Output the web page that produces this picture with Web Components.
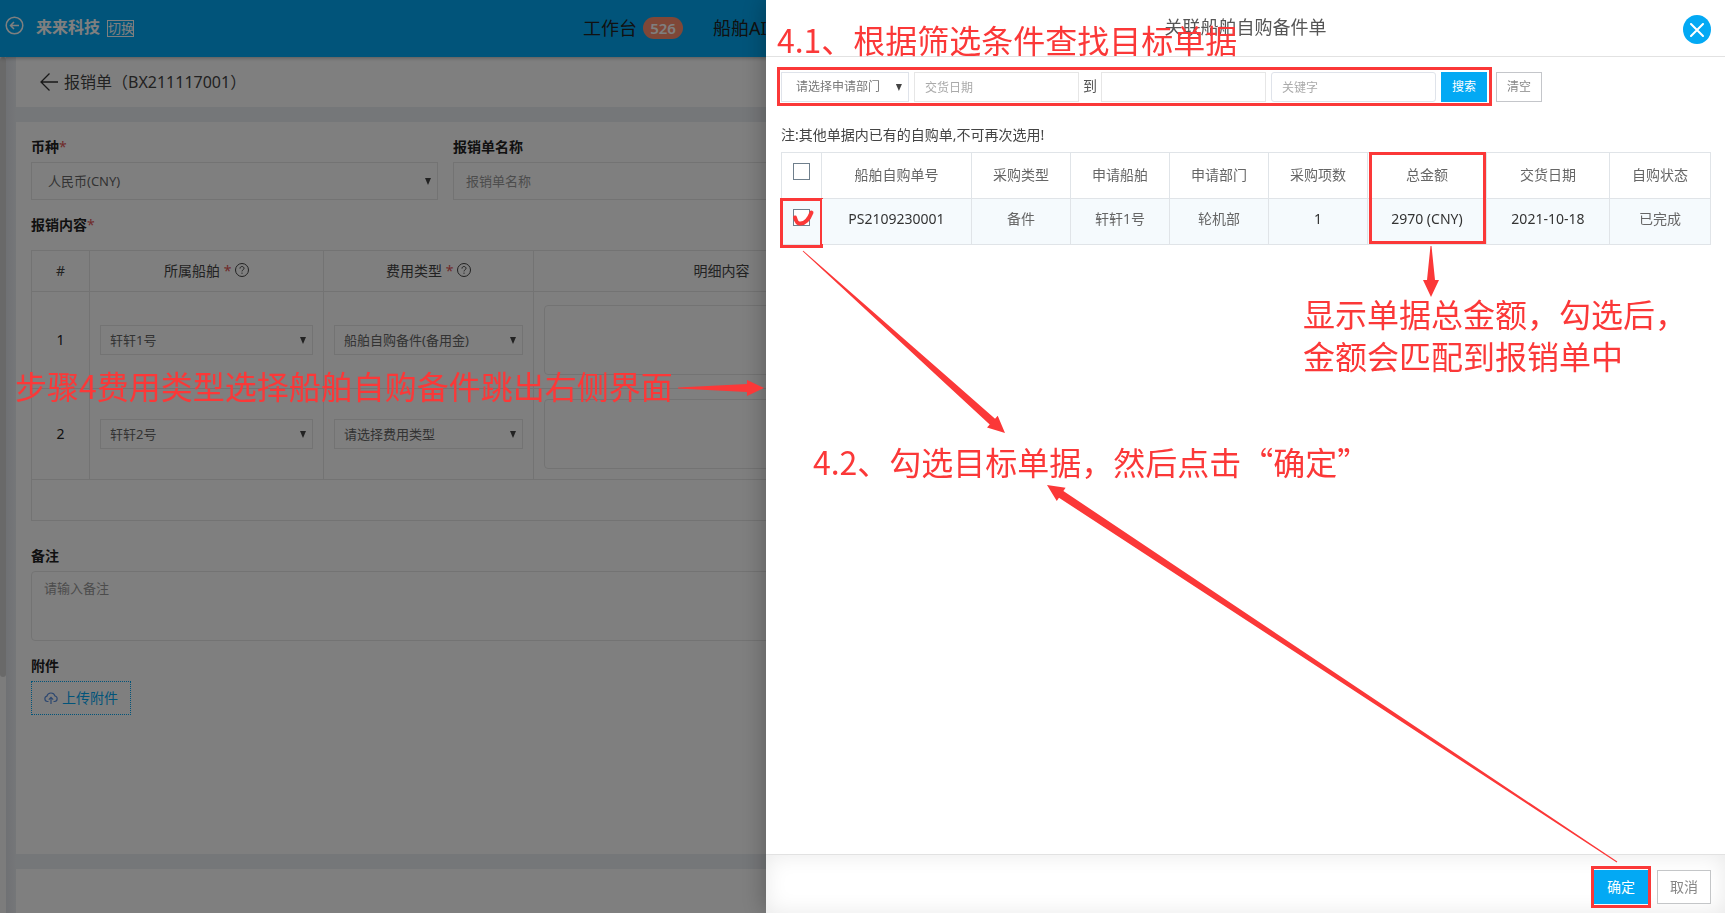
<!DOCTYPE html>
<html lang="zh-CN">
<head>
<meta charset="utf-8">
<meta name="viewport" content="width=device-width, initial-scale=1">
<title>报销单</title>
<style>
  html, body { margin: 0; height: 100%; }
  body {
    overflow: hidden;
    font-family: "Noto Sans", "Noto Sans CJK SC", sans-serif;
    font-size: 14px; line-height: 20px; color: #333;
    --brand: #03a9f4; --line: #e6e6e6; --mark: #fb3838;
  }
</style>
</head>
<body>
<expense-app></expense-app>

<script>
const BASE = `
  *, *::before, *::after { box-sizing: border-box; }
  input, select, textarea, button { font: inherit; color: inherit; margin: 0; border-radius: 0; outline: 0; }
  input, textarea, select { border: 1px solid var(--line); background: #fff; width: 100%; display: block; }
  textarea { resize: none; overflow: hidden; }
  select { appearance: none; }
  button { cursor: pointer; }
  table { border-collapse: collapse; table-layout: fixed; width: 100%; }
  th { font-weight: 400; }
`;
function define(name, css, html, setup) {
  const tpl = document.createElement('template');
  tpl.innerHTML = `<style>${BASE}${css}</style>${html}`;
  customElements.define(name, class extends HTMLElement {
    constructor() {
      super();
      this.attachShadow({ mode: 'open' }).append(tpl.content.cloneNode(true));
    }
    connectedCallback() { if (setup) setup(this, this.shadowRoot); }
  });
}

/* Wraps a <select> and draws its arrow. */
define('drop-box', `
  :host { display: block; position: relative; }
  .tri { position: absolute; right: 7px; top: 50%; margin-top: -3px; width: 6px; height: 7px;
    background: #444; clip-path: polygon(0 0, 100% 0, 50% 100%); pointer-events: none; }
`, `<slot></slot><span class="tri"></span>`);

define('help-icon', `
  :host { display: inline-block; width: 14px; height: 14px; vertical-align: -1px; }
  svg { display: block; }
`, `<svg width="14" height="14" viewBox="0 0 14 14" fill="none" stroke="#444"><circle cx="7" cy="7" r="6.500"/><path d="M5 5.600C5 4.200 5.900 3.500 7 3.500s2 .8 2 1.900c0 1.300-2 1.500-2 3M7 9.600v1.200"/></svg>`);

/* Arrow that widens from its start to its head: x1 y1 x2 y2. */
define('note-arrow', `
  :host { position: absolute; inset: 0; pointer-events: none; }
  svg { display: block; width: 100%; height: 100%; overflow: visible; }
`, `<svg><polygon fill="#fb3838"/></svg>`, (el, root) => {
  const [x1, y1, x2, y2] = el.getAttribute('line').split(' ').map(Number);
  const len = Math.hypot(x2 - x1, y2 - y1), ux = (x2 - x1) / len, uy = (y2 - y1) / len;
  const at = (back, side) => `${x2 - ux * back - uy * side},${y2 - uy * back + ux * side}`;
  root.querySelector('polygon').setAttribute('points',
    [at(len, -0.5), at(len, 0.5), at(17, 4), at(17, 8), `${x2},${y2}`, at(17, -8), at(17, -4)].join(' '));
});

define('note-text', `
  :host { position: absolute; white-space: nowrap; color: var(--mark); pointer-events: none;
    font: 32px/42px "Noto Sans CJK SC", sans-serif; }
`, `<slot></slot>`);

define('app-header', `
  :host { display: flex; align-items: center; height: 57px; background: var(--brand); color: #fff;
    box-shadow: 0 1px 4px rgba(0,0,0,.3); position: relative; flex: none; padding-left: 5px; }
  .back { display: block; margin: -6px 12px 0 0; height: 19px; }
  b { font-size: 16px; line-height: 24px; margin-right: 7px; margin-top: -4px; }
  .sw { font-size: 13px; line-height: 15px; padding: 0; width: 27px; height: 17px; border: 1px solid #fff; background: none; white-space: nowrap; }
  nav { position: absolute; left: 583px; top: 14px; display: flex; align-items: center; gap: 30px; font-size: 18px; line-height: 28px; }
  nav a { color: #222; text-decoration: none; display: flex; gap: 6px; align-items: center; white-space: nowrap; }
  .badge { background: #ff8f6e; color: #fff; font-weight: 600; font-size: 15px; line-height: 22px; width: 40px; border-radius: 11px; text-align: center; }
`, `
  <a class="back" href="#" aria-label="返回"><svg width="19" height="19" viewBox="0 0 19 19" fill="none" stroke="#fff" stroke-width="1.500"><circle cx="9.500" cy="9.500" r="8.300"/><path d="M14 9.500H5.500M9 6L5.500 9.500 9 13"/></svg></a>
  <b>来来科技</b><button class="sw">切换</button>
  <nav><a href="#">工作台<span class="badge">526</span></a><a href="#">船舶AIS</a></nav>
`);

define('title-bar', `
  :host { display: flex; align-items: center; gap: 6px; height: 50px; background: #fff; padding-left: 24px; font-size: 16px; line-height: 24px; flex: none; color: #444; }
  a { display: block; height: 18px; }
  h1 { font: inherit; margin: 0; }
`, `<a href="#" aria-label="后退"><svg width="18" height="18" viewBox="0 0 18 18" fill="none" stroke="#333" stroke-width="1.300"><path d="M18 9H1M9.500 .5L1 9l8.500 8.500"/></svg></a><h1><slot></slot></h1>`);

define('detail-table', `
  :host { display: block; }
  table { text-align: center; }
  th, td { border: 1px solid var(--line); padding: 0 10px; }
  thead th { height: 41px; color: #444; }
  .r1 td { height: 97px; } .r2 td { height: 91px; } tfoot td { height: 41px; }
  i { font-style: normal; color: #e05555; }
  td { color: #222; }
  select { height: 30px; padding: 0 9px; font-size: 13px; color: #666; }
  textarea { height: 70px; border-radius: 4px; }
`, `
  <table>
    <colgroup><col style="width:58px"><col style="width:234px"><col style="width:210px"><col style="width:376px"><col></colgroup>
    <thead><tr><th>#</th><th>所属船舶 <i>*</i> <help-icon></help-icon></th><th>费用类型 <i>*</i> <help-icon></help-icon></th><th>明细内容</th><th></th></tr></thead>
    <tbody>
      <tr class="r1"><td>1</td><td><drop-box><select aria-label="所属船舶"><option>轩轩1号</option></select></drop-box></td><td><drop-box><select aria-label="费用类型"><option>船舶自购备件(备用金)</option></select></drop-box></td><td><textarea aria-label="明细内容"></textarea></td><td></td></tr>
      <tr class="r2"><td>2</td><td><drop-box><select aria-label="所属船舶"><option>轩轩2号</option></select></drop-box></td><td><drop-box><select aria-label="费用类型"><option>请选择费用类型</option></select></drop-box></td><td><textarea aria-label="明细内容"></textarea></td><td></td></tr>
    </tbody>
    <tfoot><tr><td colspan="5"></td></tr></tfoot>
  </table>
`);

define('claim-form', `
  :host { display: block; background: #fff; padding: 15px 15px 0; }
  .row { display: grid; grid-template-columns: repeat(4, 1fr); gap: 15px; }
  label, .label { display: block; font-weight: 700; color: #222; line-height: 20px; margin-bottom: 5px; }
  .label { margin: 15px 0; }
  i { font-style: normal; font-weight: 400; color: #e05555; }
  .row select, .row input { height: 38px; font-size: 13px; color: #666; padding: 0 12px; }
  .row select { padding-left: 16px; }
  ::placeholder { color: #999; opacity: 1; }
  .memo { margin-top: 25px; }
  textarea { height: 70px; border-radius: 4px; font-size: 13px; padding: 6px 12px; }
  .files { margin-top: 15px; }
  button { display: flex; align-items: center; gap: 4px; height: 34px; width: 100px; padding: 0 12px; background: none; border: 1px dotted var(--brand); color: var(--brand); white-space: nowrap; }
  svg { flex: none; }
`, `
  <div class="row">
    <div><label for="cur">币种<i>*</i></label><drop-box><select id="cur"><option>人民币(CNY)</option></select></drop-box></div>
    <div><label for="nm">报销单名称</label><input id="nm" placeholder="报销单名称"></div>
  </div>
  <div class="label">报销内容<i>*</i></div>
  <detail-table></detail-table>
  <div class="memo"><label for="memo">备注</label><textarea id="memo" placeholder="请输入备注"></textarea></div>
  <div class="files"><label for="up">附件</label>
    <button id="up"><svg width="14" height="14" viewBox="0 0 14 14" fill="none" stroke="#5a8fe0" stroke-width="1.200"><path d="M4.500 10.500H3.300A2.700 2.700 0 0 1 2.900 5.200 4.200 4.200 0 0 1 11 5a2.800 2.800 0 0 1-.3 5.500H9.500M7 13V6.500M4.800 8.600L7 6.400l2.200 2.200"/></svg>上传附件</button></div>
`);

define('filter-bar', `
  :host { display: flex; gap: 9px; font-size: 12px; }
  .group { display: flex; gap: 5px; position: relative; }
  .group::after { content: ""; position: absolute; inset: -5px -5px -4px -4px; border: 3px solid var(--mark); pointer-events: none; }
  input { width: 165px; height: 30px; padding: 0 10px; }
  select { width: 128px; height: 30px; padding: 0 14px; color: #777; border-color: #dfe3ea; }
  .kw { border-radius: 3px; border-color: #dfe3ea; }
  .to { font-size: 14px; line-height: 28px; width: 12px; display: flex; justify-content: center; color: #555; }
  ::placeholder { color: #aaa; opacity: 1; }
  button { width: 46px; height: 30px; padding: 0; border: 0; background: var(--brand); color: #fff; }
  .clear { background: #fff; color: #888; border: 1px solid #c4c6ca; }
`, `
  <div class="group">
    <drop-box><select aria-label="申请部门"><option>请选择申请部门</option></select></drop-box>
    <input placeholder="交货日期" aria-label="交货日期起"><span class="to">到</span>
    <input aria-label="交货日期止"><input class="kw" placeholder="关键字" aria-label="关键字">
    <button>搜索</button>
  </div>
  <button class="clear">清空</button>
`);

define('order-table', `
  :host { display: block; }
  table { text-align: center; }
  th, td { border: 1px solid #e0e4e8; height: 46px; padding: 0 0 2px; position: relative; }
  th { color: #666; }
  td { background: #f5fafd; padding-bottom: 5px; }
  .cn { color: #666; }
  .pick { padding: 0 0 8px; }
  input { appearance: none; width: 17px; height: 17px; border: 1px solid #6f7f8c; margin: 0 auto; }
  .boxed::after { content: ""; position: absolute; inset: -1px -2px -4px -2px; border: 3px solid var(--mark); }
  .sum::after { content: ""; position: absolute; z-index: 1; inset: -1px 0 -46px 1px; border: 3px solid var(--mark); pointer-events: none; }
  .tick { position: absolute; left: 9px; top: 9px; }
`, `
  <table>
    <colgroup><col style="width:40px"><col style="width:150px"><col style="width:99px"><col style="width:99px"><col style="width:99px"><col style="width:99px"><col style="width:119px"><col style="width:123px"><col style="width:101px"></colgroup>
    <thead><tr><th class="pick"><input type="checkbox" aria-label="全选"></th><th>船舶自购单号</th><th>采购类型</th><th>申请船舶</th><th>申请部门</th><th>采购项数</th><th class="sum">总金额</th><th>交货日期</th><th>自购状态</th></tr></thead>
    <tbody><tr><td class="pick boxed"><input type="checkbox" aria-label="选择 PS2109230001"><svg class="tick" width="24" height="20" viewBox="0 0 24 20" fill="none" stroke="#fb3838" stroke-width="4" stroke-linecap="round" stroke-linejoin="round"><path d="M4 9.500C5 13 6 15.500 8.500 15.500C14 16 18 11 20.500 4.500"/></svg></td><td>PS2109230001</td><td class="cn">备件</td><td class="cn">轩轩1号</td><td class="cn">轮机部</td><td>1</td><td>2970 (CNY)</td><td>2021-10-18</td><td class="cn">已完成</td></tr></tbody>
  </table>
`);

define('side-drawer', `
  :host { position: fixed; right: 0; top: 0; bottom: 0; width: 55.6%; background: #fff; display: flex; flex-direction: column; box-shadow: 0 0 24px rgba(0,0,0,.3); }
  header { height: 57px; border-bottom: 1px solid #e2e2e2; display: flex; justify-content: center; flex: none; }
  h2 { margin: 12px 0 0; font-size: 18px; line-height: 30px; font-weight: 400; color: #555; }
  .close { position: absolute; right: 14px; top: 15px; width: 28px; height: 29px; border: 0; padding: 0; border-radius: 50%; background: var(--brand); display: grid; place-items: center; }
  main { flex: 1; padding: 15px 15px 0; }
  p { margin: 23px 0 7px; color: #444; }
  footer { height: 59px; flex: none; border-top: 1px solid #e2e2e2; padding: 15px 14px 0; display: flex; justify-content: flex-end; gap: 9px; box-shadow: inset 0 0 22px rgba(0,0,0,.09); }
  footer button { width: 54px; height: 34px; padding: 0; border: 1px solid #c4c6c8; background: #fff; color: #888; }
  .ok { position: relative; background: var(--brand) !important; border: 0 !important; color: #fff !important; }
  .ok::after { content: ""; position: absolute; inset: -4px -3px; border: 3px solid var(--mark); }
`, `
  <header><h2>关联船舶自购备件单</h2>
    <button class="close" aria-label="关闭"><svg width="14" height="14" viewBox="0 0 14 14" stroke="#fff" stroke-width="2" stroke-linecap="round"><path d="M1 1l12 12M13 1L1 13"/></svg></button></header>
  <main><filter-bar></filter-bar><p>注:其他单据内已有的自购单,不可再次选用!</p><order-table></order-table></main>
  <footer><button class="ok">确定</button><button>取消</button></footer>
  <slot></slot>
`);

define('expense-app', `
  :host { display: flex; flex-direction: column; height: 100vh; background: #fff; }
  .body { flex: 1; display: flex; min-height: 0; }
  .scroll { width: 6px; background: #f8f8f8; }
  .scroll::before { content: ""; display: block; height: 620px; background: #d2d2d2; border-radius: 3px; }
  .cards { flex: 1; min-width: 0; display: flex; flex-direction: column; gap: 15px; padding: 0 6px 0 10px; background: linear-gradient(90deg, #dfe2e8, #ebeef2 10px); }
  claim-form { flex: 1; }
  .foot { height: 44px; background: #fff; flex: none; }
  .mask { position: fixed; inset: 0; background: rgba(0,0,0,.5); }
  .notes { position: fixed; inset: 0; pointer-events: none; }
`, `
  <app-header></app-header>
  <div class="body"><div class="scroll"></div>
    <div class="cards"><title-bar>报销单（BX211117001）</title-bar><claim-form></claim-form><div class="foot"></div></div></div>
  <div class="mask"></div>
  <side-drawer>
    <note-text style="left:11px;top:18px">4.1、根据筛选条件查找目标单据</note-text>
    <note-text style="left:537px;top:292px">显示单据总金额，勾选后，<br>金额会匹配到报销单中</note-text>
    <note-text style="left:47px;top:440px">4.2、勾选目标单据，然后点击“确定”</note-text>
    <note-arrow line="37 251 239 433"></note-arrow>
    <note-arrow line="665 246 665 297"></note-arrow>
    <note-arrow line="851 862 281 485"></note-arrow>
  </side-drawer>
  <div class="notes">
    <note-text style="left:15px;top:364px">步骤4费用类型选择船舶自购备件跳出右侧界面</note-text>
    <note-arrow line="678 388 764 388"></note-arrow>
  </div>
`);
</script>
</body>
</html>
